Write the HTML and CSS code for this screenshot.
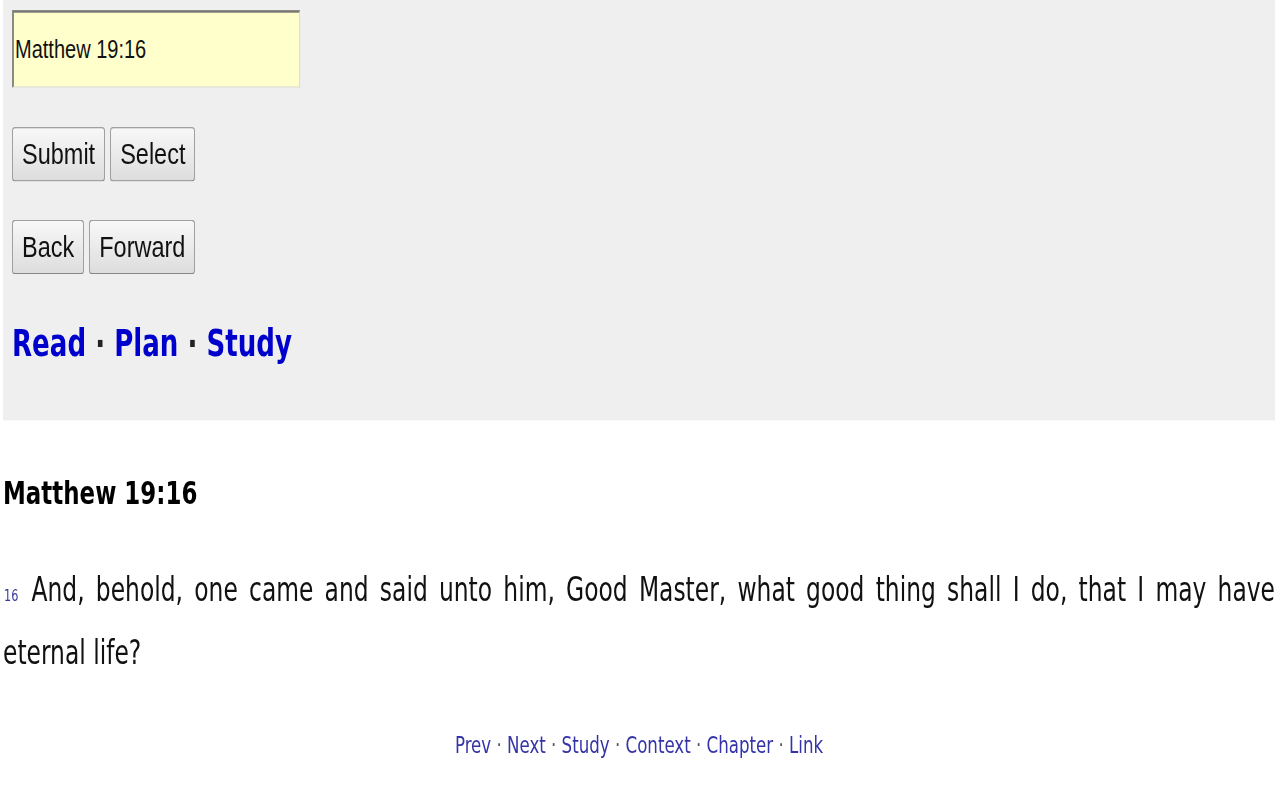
FILE: index.html
```html
<!DOCTYPE html>
<html>
<head>
<meta charset="utf-8">
<title>Matthew 19:16</title>
<link rel="stylesheet" href="styles.css">
</head>
<body>
<div class="page">
  <div class="panel">
    <input class="ref" type="text" value="Matthew 19:16">
    <div class="btns">
      <button class="btn">Submit</button>
      <button class="btn">Select</button>
    </div>
    <div class="btns">
      <button class="btn">Back</button>
      <button class="btn">Forward</button>
    </div>
    <div class="nav"><a href="#">Read</a> · <a href="#">Plan</a> · <a href="#">Study</a></div>
  </div>
  <h2 class="title">Matthew 19:16</h2>
  <p class="verse"><span class="vnum">16</span> And, behold, one came and said unto him, Good Master, what good thing shall I do, that I may have eternal life?</p>
  <div class="foot"><a href="#">Prev</a> · <a href="#">Next</a> · <a href="#">Study</a> · <a href="#">Context</a> · <a href="#">Chapter</a> · <a href="#">Link</a></div>
</div>
</body>
</html>
```
FILE: styles.css
```css
html {
  background: #ffffff;
}

body {
  margin: 0;
  min-height: 800px;
  background: #ffffff;
}

.page {
  margin: 0 5px 0 3px;
  transform: scaleY(1.27);
  transform-origin: 0 0;
  font-family: "DejaVu Sans Condensed", "DejaVu Sans", sans-serif;
  color: #111111;
}

.panel {
  background: #efefef;
  padding: 8px 9px 43px;
  display: flex;
  flex-direction: column;
  align-items: flex-start;
}

.ref {
  width: 288px;
  height: 61.4px;
  box-sizing: border-box;
  margin: 0;
  padding: 0 0 0 1px;
  border-style: solid;
  border-width: 2px 1px 1px 2px;
  border-color: #767676 #dcdcdc #dcdcdc #8a8a8a;
  background: #ffffcc;
  font: 20px "Liberation Sans", Arial, sans-serif;
  color: #111111;
  outline: none;
}

.btns {
  display: flex;
  gap: 5px;
  margin-top: 30.7px;
}

.btn {
  height: 42.5px;
  box-sizing: border-box;
  margin: 0;
  padding: 0 9px;
  font: 23.5px "Liberation Sans", Arial, sans-serif;
  color: #111111;
  border: 1px solid #a0a0a0;
  border-bottom-color: #888888;
  border-radius: 3px;
  background: linear-gradient(#f8f8f8, #dddddd);
}

.nav {
  margin-top: 37.7px;
  font-size: 29px;
  line-height: 35px;
  font-weight: bold;
  color: #222222;
}

.nav a {
  color: #0000cc;
  text-decoration: none;
}

.title {
  margin: 41.4px 0 0;
  font-size: 25.5px;
  line-height: 30px;
  font-weight: bold;
  color: #000000;
}

.verse {
  margin: 36px 0 0;
  font-size: 26px;
  line-height: 50.4px;
  text-align: justify;
  color: #111111;
}

.vnum {
  display: inline-block;
  margin: 0 2px 0 1px;
  font-size: 12.5px;
  line-height: 1;
  color: #3a3a9c;
}

.foot {
  margin-top: 36px;
  text-align: center;
  font-size: 18.5px;
  line-height: 22px;
  color: #555555;
}

.foot a {
  color: #3434a8;
  text-decoration: none;
}
```
